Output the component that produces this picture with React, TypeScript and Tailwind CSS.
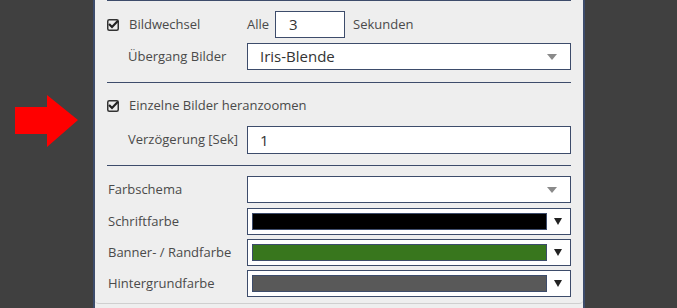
import React from "react";

const font = { fontFamily: '"Open Sans", "Noto Sans", sans-serif' };

function Check() {
  return (
    <svg width="12" height="12" viewBox="0 0 12 12" className="shrink-0">
      <rect x="0.75" y="0.75" width="10.5" height="10.5" rx="1.5" fill="none" stroke="#333" strokeWidth="1.5" />
      <path d="M2.8 5.8 L5 8 L10.2 2.6" fill="none" stroke="#222" strokeWidth="2.2" strokeLinecap="square" />
    </svg>
  );
}

function GrayArrow() {
  return (
    <svg width="10" height="6" viewBox="0 0 10 6" className="shrink-0">
      <path d="M0 0 H10 L5 6 Z" fill="#8a8a8a" />
    </svg>
  );
}

function BlackArrow() {
  return (
    <svg width="8" height="7" viewBox="0 0 8 7" className="shrink-0">
      <path d="M0 0 H8 L4 7 Z" fill="#222" />
    </svg>
  );
}

function ColorRow({ label, color }: { label: string; color: string }) {
  return (
    <div className="flex items-center h-[27px]">
      <div className="w-[140px] text-[13px] text-[#4a4a4a] pl-[1px]">{label}</div>
      <div className="flex-1 h-[27px] border border-[#3d4c6b] bg-white flex items-center pl-[4px] pr-[8px]">
        <div className="flex-1 h-[17px] border border-[#3d4c6b]" style={{ background: color }} />
        <div className="ml-[7px]">
          <BlackArrow />
        </div>
      </div>
    </div>
  );
}

export default function App() {
  return (
    <div className="w-[677px] h-[308px] bg-[#404040] flex overflow-hidden" style={font}>
      <div className="w-[93px] shrink-0 pl-[15px] pt-[95px]">
        <svg width="63" height="52" viewBox="0 0 63 52">
          <path d="M0 12 H32 V0 L63 25 L32 52 V39 H0 Z" fill="#ff0000" />
        </svg>
      </div>
      <div className="w-[492px] shrink-0 h-full border-l-2 border-r-2 border-[#3d4c6b] bg-[#eeeeee] flex flex-col">
        <div className="h-[304px] border-b border-[#cfcfcf] rounded-b-[4px] pl-[12px] pr-[12px]">
          <div className="h-[1px] bg-[#3d4c6b]" />
          <div className="flex items-center mt-[10px] h-[27px]">
            <Check />
            <span className="ml-[10px] w-[118px] text-[13px] text-[#4a4a4a]">Bildwechsel</span>
            <span className="text-[13px] text-[#4a4a4a] mr-[6px]">Alle</span>
            <div className="w-[70px] h-[27px] border border-[#3d4c6b] bg-white flex items-center pl-[13px] text-[15px] text-[#333]">3</div>
            <span className="ml-[8px] text-[13px] text-[#4a4a4a]">Sekunden</span>
          </div>
          <div className="flex items-center mt-[5px] h-[27px]">
            <span className="w-[140px] pl-[21px] text-[13px] text-[#4a4a4a]">Übergang Bilder</span>
            <div className="flex-1 h-[27px] border border-[#3d4c6b] bg-white flex items-center justify-between pl-[12px] pr-[13px] text-[15px] text-[#333]">
              <span>Iris-Blende</span>
              <GrayArrow />
            </div>
          </div>
          <div className="h-[1px] bg-[#3d4c6b] mt-[12px]" />
          <div className="flex items-center mt-[17px] h-[12px]">
            <Check />
            <span className="ml-[10px] text-[13px] text-[#4a4a4a]">Einzelne Bilder heranzoomen</span>
          </div>
          <div className="flex items-center mt-[14px] h-[28px]">
            <span className="w-[140px] pl-[21px] text-[13px] text-[#4a4a4a]">Verzögerung [Sek]</span>
            <div className="flex-1 h-[28px] border border-[#3d4c6b] bg-white flex items-center pl-[12px] text-[15px] text-[#333]">1</div>
          </div>
          <div className="h-[1px] bg-[#3d4c6b] mt-[11px]" />
          <div className="flex items-center mt-[10px] h-[27px]">
            <div className="w-[140px] text-[13px] text-[#4a4a4a] pl-[1px]">Farbschema</div>
            <div className="flex-1 h-[27px] border border-[#3d4c6b] bg-white flex items-center justify-end pr-[13px]">
              <GrayArrow />
            </div>
          </div>
          <div className="flex flex-col gap-[4px] mt-[5px]">
            <ColorRow label="Schriftfarbe" color="#000000" />
            <ColorRow label="Banner- / Randfarbe" color="#38761d" />
            <ColorRow label="Hintergrundfarbe" color="#595959" />
          </div>
        </div>
      </div>
    </div>
  );
}
